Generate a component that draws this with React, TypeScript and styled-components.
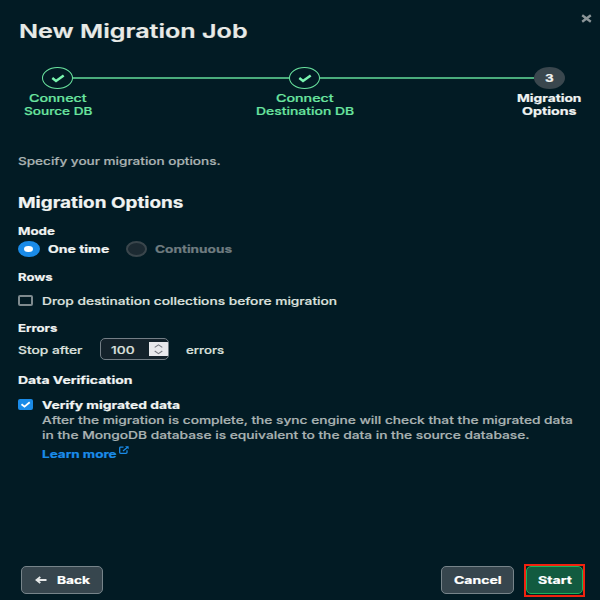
import React, { useLayoutEffect, useRef, useState } from "react";
import styled, { createGlobalStyle, css } from "styled-components";

const GlobalStyle = createGlobalStyle`
  * { box-sizing: border-box; }
  html, body { margin: 0; padding: 0; background: #021b24; }
`;

const color = {
  white: "#f0f3f2",
  text: "#dde1df",
  muted: "#aab3b3",
  disabled: "#6f7c80",
  green: "#6be5a0",
  blue: "#1a8be8",
};

/* Text set in an extended width: glyphs widen to fill the given measure. */
const Measure = styled.span<{ $w: number; $h: number }>`
  display: block;
  flex: none;
  text-align: left;
  width: ${(p) => p.$w}px;
  height: ${(p) => p.$h}px;
`;

const Glyphs = styled.span<{ $size: number; $weight: number; $color: string; $h: number }>`
  display: inline-block;
  vertical-align: top;
  white-space: nowrap;
  transform-origin: 0 50%;
  font-family: Inter, "Liberation Sans", sans-serif;
  font-size: ${(p) => p.$size}px;
  font-weight: ${(p) => p.$weight};
  line-height: ${(p) => p.$h}px;
  color: ${(p) => p.$color};
  -webkit-text-stroke: 0.2px ${(p) => p.$color};
`;

interface WideTextProps {
  children: string;
  w: number;
  h?: number;
  size?: number;
  weight?: number;
  tone?: string;
  low?: boolean;
}

function WideText({ children, w, h = 15, size = 10.8, weight = 500, tone = color.text, low }: WideTextProps) {
  const ref = useRef<HTMLSpanElement>(null);
  const [scale, setScale] = useState(1.2);
  useLayoutEffect(() => {
    if (ref.current) setScale(w / ref.current.offsetWidth);
  }, [w, children]);
  return (
    <Measure $w={w} $h={h}>
      <Glyphs
        ref={ref}
        $size={size}
        $weight={weight}
        $color={tone}
        $h={h}
        style={{ transform: `translateY(${low ? 1.2 : 0.4}px) scaleX(${scale})` }}
      >
        {children}
      </Glyphs>
    </Measure>
  );
}

const Dialog = styled.main`
  width: 600px;
  height: 600px;
  overflow: hidden;
  display: flex;
  flex-direction: column;
  background: #021b24;
`;

const Header = styled.header`
  display: flex;
  justify-content: space-between;
  flex: none;
  height: 67px;
  padding: 19px 7px 0 18.5px;
`;

const CloseButton = styled.button`
  width: 13px;
  height: 9px;
  margin-top: -5px;
  padding: 0;
  border: 0;
  background: none;
  svg { display: block; }
`;

const Stepper = styled.ol`
  display: grid;
  grid-template-columns: 115px 379px 110px;
  flex: none;
  height: 86.6px;
  margin: 0;
  padding: 0;
  list-style: none;
`;

const Step = styled.li`
  display: flex;
  flex-direction: column;
  align-items: center;
`;

const StepLine = styled.div`
  display: flex;
  align-items: center;
  align-self: stretch;
  height: 22px;
  margin-bottom: 4px;
`;

const Track = styled.span<{ $visible?: boolean }>`
  flex: 1;
  height: 2px;
  background: ${(p) => (p.$visible ? "#4aac7c" : "transparent")};
`;

const Disc = styled.span<{ $current?: boolean }>`
  display: flex;
  align-items: center;
  justify-content: center;
  width: 31px;
  height: 22px;
  border-radius: 50%;
  ${(p) =>
    p.$current
      ? css`background: #3a474e;`
      : css`border: 1.3px solid #6be5a0;`}
`;

const StepLabel = styled.div`
  display: flex;
  flex-direction: column;
  align-items: center;
`;

const Form = styled.section`
  flex: 1;
  display: flex;
  flex-direction: column;
  align-items: flex-start;
  padding-left: 18px;
`;

const Row = styled.div<{ $top?: number; $height?: number }>`
  display: flex;
  align-items: center;
  flex: none;
  margin-top: ${(p) => p.$top ?? 0}px;
  height: ${(p) => p.$height ?? 15}px;
`;

const Radio = styled.span<{ $checked?: boolean; $left?: number; $right: number }>`
  flex: none;
  width: 21.5px;
  height: 16px;
  margin: 0 ${(p) => p.$right}px 0 ${(p) => p.$left ?? 0}px;
  border-radius: 50%;
  display: flex;
  align-items: center;
  justify-content: center;
  background: ${(p) => (p.$checked ? "#1a8be8" : "#1c2a32")};
  border: ${(p) => (p.$checked ? "0" : "2px solid #3a464c")};
  &::after {
    content: "";
    width: 9px;
    height: 6.6px;
    border-radius: 50%;
    background: ${(p) => (p.$checked ? "#fff" : "transparent")};
  }
`;

const Checkbox = styled.span<{ $checked?: boolean }>`
  flex: none;
  display: flex;
  align-items: center;
  justify-content: center;
  width: 15px;
  height: 11px;
  margin-right: 8.5px;
  border-radius: 2px;
  background: ${(p) => (p.$checked ? "#1a8be8" : "transparent")};
  border: ${(p) => (p.$checked ? "0" : "2px solid #7e8a8e")};
  svg { display: block; }
`;

const NumberField = styled.div`
  display: flex;
  align-items: center;
  width: 69px;
  height: 22px;
  margin: 0 17px 0 17px;
  padding-left: 10px;
  border: 1.3px solid #747e86;
  border-radius: 5px;
  background: #14222b;
  overflow: hidden;
`;

const Spinner = styled.span`
  width: 19px;
  height: 14px;
  margin-left: auto;
  background: #e9e9ed;
  svg { display: block; }
`;

const Description = styled.div`
  display: flex;
  flex-direction: column;
  padding: 0.4px 0 0 23.5px;
`;

const Link = styled.a`
  display: flex;
  margin-top: 3.6px;
  gap: 2px;
  svg { display: block; }
`;

const Footer = styled.footer`
  display: flex;
  align-items: center;
  flex: none;
  height: 40px;
  padding: 0 15px 0 21px;
`;

const Button = styled.button<{ $w: number; $primary?: boolean }>`
  display: flex;
  align-items: center;
  justify-content: center;
  flex: none;
  width: ${(p) => p.$w}px;
  height: 28px;
  padding: 0;
  border: 1px solid ${(p) => (p.$primary ? "#1bb25c" : "#77848a")};
  border-radius: 5px;
  background: ${(p) => (p.$primary ? "#125b40" : "#37464e")};
  svg { margin-right: 10px; }
`;

const Spacer = styled.span`
  flex: 1;
`;

const Highlight = styled.div`
  margin-left: 10px;
  display: flex;
  align-items: center;
  justify-content: center;
  width: 61px;
  height: 33px;
  border: 2.4px solid #f0230f;
  background: #071f20;
`;

const StepCheck = () => (
  <svg width="14" height="9" viewBox="0 0 14 9" fill="none">
    <path d="M1.3 4.1 5 6.9 12.7 1.4" stroke="#7af5b0" strokeWidth="2.5" />
  </svg>
);

export default function App() {
  return (
    <>
      <GlobalStyle />
      <Dialog>
        <Header>
          <WideText w={228} h={24} size={19.3} weight={600} tone="#e8eae7">New Migration Job</WideText>
          <CloseButton aria-label="Close">
            <svg width="13" height="9" viewBox="0 0 13 9">
              <path d="M2.2 1.3 10.8 7.7M10.8 1.3 2.2 7.7" stroke="#8b9598" strokeWidth="2.4" />
            </svg>
          </CloseButton>
        </Header>

        <Stepper>
          <Step>
            <StepLine><Track /><Disc><StepCheck /></Disc><Track $visible /></StepLine>
            <StepLabel>
              <WideText w={58} h={12} tone={color.green}>Connect</WideText>
              <WideText low w={68} h={12} tone={color.green}>Source DB</WideText>
            </StepLabel>
          </Step>
          <Step>
            <StepLine><Track $visible /><Disc><StepCheck /></Disc><Track $visible /></StepLine>
            <StepLabel>
              <WideText w={58} h={12} tone={color.green}>Connect</WideText>
              <WideText low w={98} h={12} tone={color.green}>Destination DB</WideText>
            </StepLabel>
          </Step>
          <Step>
            <StepLine>
              <Track $visible />
              <Disc $current><WideText low w={9} h={14} size={10.5} weight={700} tone={color.white}>3</WideText></Disc>
              <Track />
            </StepLine>
            <StepLabel>
              <WideText w={65} h={12} weight={700} tone={color.white}>Migration</WideText>
              <WideText low w={54} h={12} weight={700} tone={color.white}>Options</WideText>
            </StepLabel>
          </Step>
        </Stepper>

        <Form>
          <WideText w={202} tone={color.muted}>Specify your migration options.</WideText>
          <Row $top={24} $height={20}>
            <WideText w={166} h={20} size={14.8} weight={700} tone={color.white}>Migration Options</WideText>
          </Row>
          <Row $top={11}>
            <WideText w={37} weight={700} tone={color.white}>Mode</WideText>
          </Row>
          <Row $top={2.4} $height={16}>
            <Radio $checked $right={8} />
            <WideText low w={61} weight={700} tone={color.white}>One time</WideText>
            <Radio $left={17} $right={7.5} />
            <WideText low w={77} weight={700} tone={color.disabled}>Continuous</WideText>
          </Row>
          <Row $top={12}>
            <WideText low w={35} weight={700} tone={color.white}>Rows</WideText>
          </Row>
          <Row $top={9}>
            <Checkbox />
            <WideText low w={295}>Drop destination collections before migration</WideText>
          </Row>
          <Row $top={12.6}>
            <WideText w={39} weight={700} tone={color.white}>Errors</WideText>
          </Row>
          <Row $top={2.6} $height={22}>
            <WideText low w={65}>Stop after</WideText>
            <NumberField>
              <WideText low w={23} h={15}>100</WideText>
              <Spinner>
                <svg width="19" height="14" viewBox="0 0 19 14" fill="none" stroke="#777982" strokeWidth="1.1">
                  <path d="M5.7 5.4 9.5 2.8 13.3 5.4M5.7 9 9.5 11.6 13.3 9" />
                </svg>
              </Spinner>
            </NumberField>
            <WideText low w={38}>errors</WideText>
          </Row>
          <Row $top={12.4}>
            <WideText w={114} weight={700} tone={color.white}>Data Verification</WideText>
          </Row>
          <Row $top={9}>
            <Checkbox $checked>
              <svg width="15" height="11" viewBox="0 0 15 11" fill="none">
                <path d="M3.5 5.3 6.5 7.7 11.7 3.3" stroke="#fff" strokeWidth="1.8" />
              </svg>
            </Checkbox>
            <WideText low w={138.5} weight={700} tone={color.white}>Verify migrated data</WideText>
          </Row>
          <Description>
            <WideText low w={531.5} tone={color.muted}>After the migration is complete, the sync engine will check that the migrated data</WideText>
            <WideText low w={488} tone={color.muted}>in the MongoDB database is equivalent to the data in the source database.</WideText>
            <Link>
              <WideText low w={75} weight={700} tone={color.blue}>Learn more</WideText>
              <svg width="10" height="8" viewBox="0 0 10 8" fill="none" stroke="#1a8be8" strokeWidth="1.3">
                <path d="M4.5 1.2H1.6Q.7 1.2.7 2V6.5Q.7 7.3 1.6 7.3H7Q8 7.3 8 6.5V4.3M4 5 8.8 1" />
                <path d="M6 .3H9.6V3.2Z" fill="#1a8be8" stroke="none" />
              </svg>
            </Link>
          </Description>
        </Form>

        <Footer>
          <Button $w={82}>
            <svg width="12" height="8" viewBox="0 0 12 8" fill="none" stroke="#e6e9e9" strokeWidth="1.8">
              <path d="M1.5 4H11.5M5.3 1 1.5 4 5.3 7" />
            </svg>
            <WideText w={33} weight={700} tone="#fff">Back</WideText>
          </Button>
          <Spacer />
          <Button $w={73}>
            <WideText w={48} weight={700} tone="#fff">Cancel</WideText>
          </Button>
          <Highlight>
            <Button $w={57} $primary>
              <WideText w={34} weight={700} tone="#fff">Start</WideText>
            </Button>
          </Highlight>
        </Footer>
      </Dialog>
    </>
  );
}
